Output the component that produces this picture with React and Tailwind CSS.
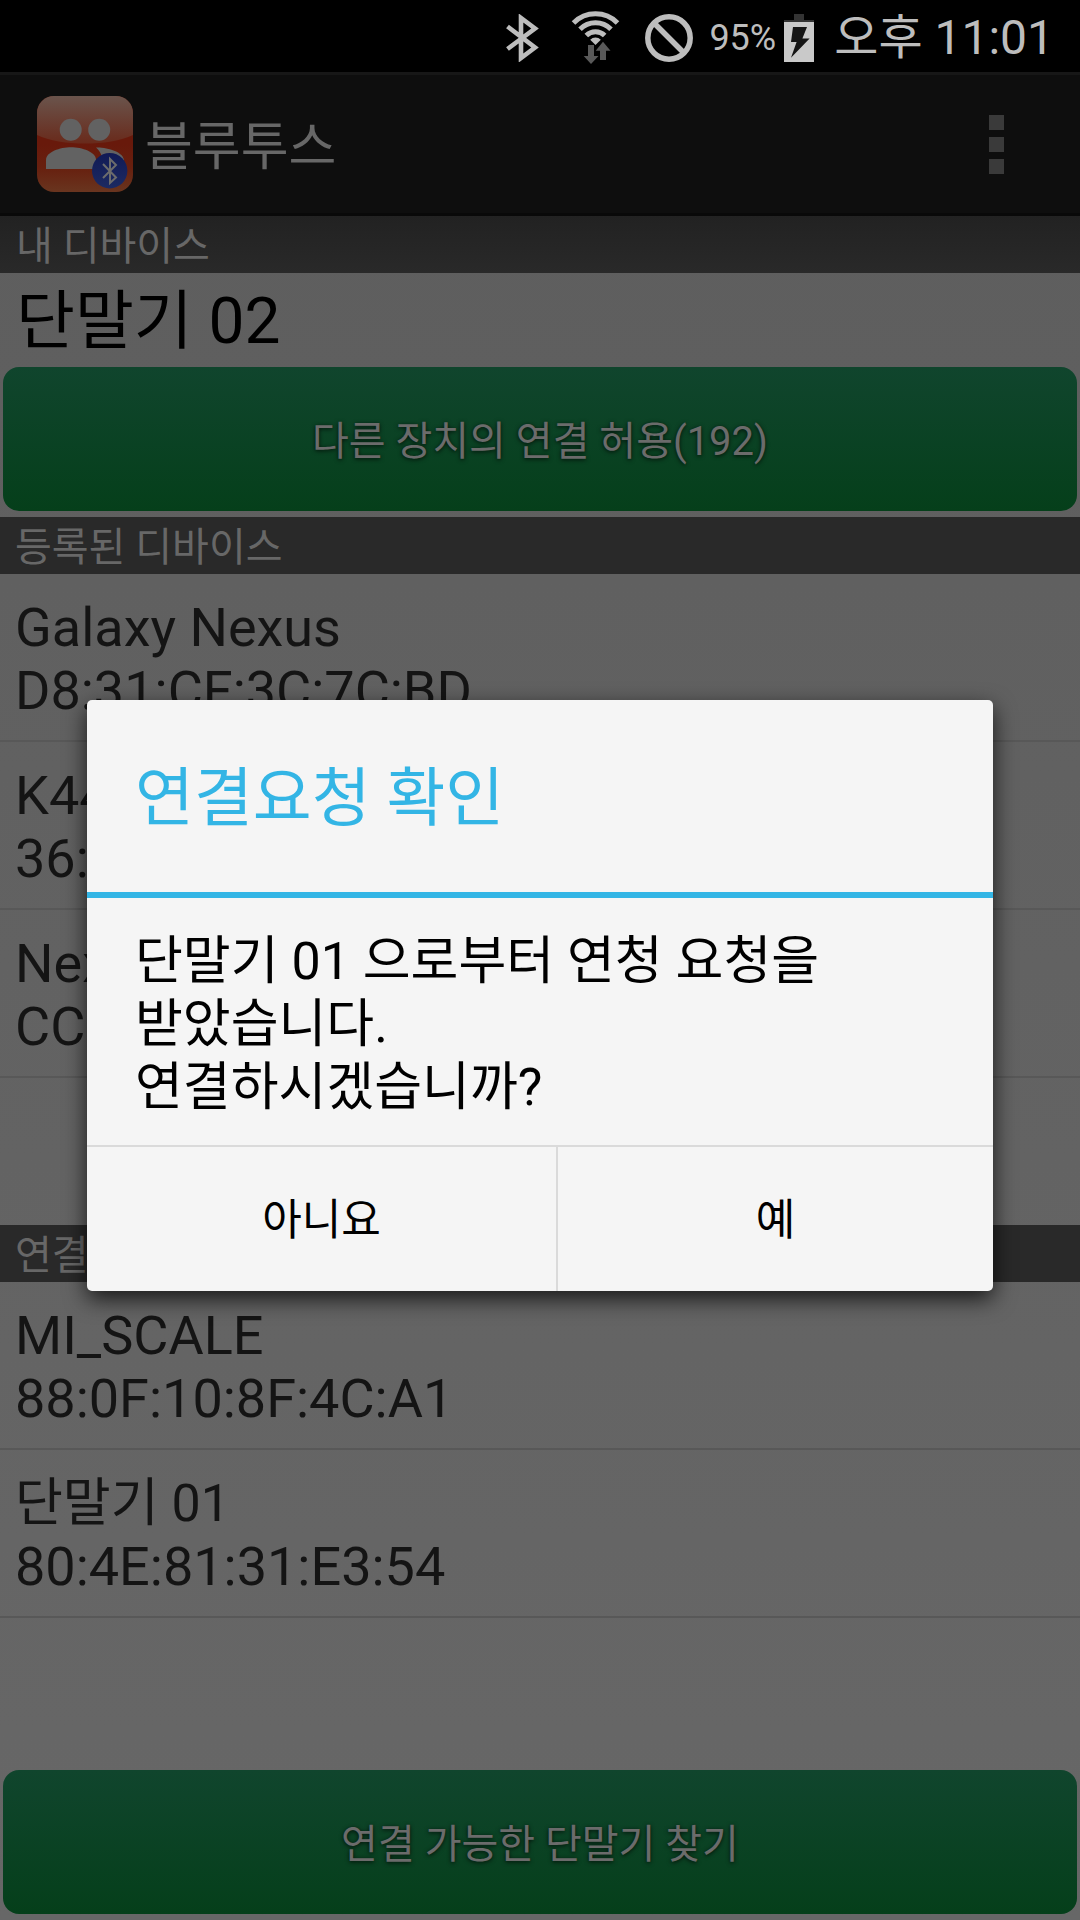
const paired = [
  { name: "Galaxy Nexus", address: "D8:31:CF:3C:7C:BD" },
  { name: "K44", address: "36:" },
  { name: "Nex", address: "CC" },
];

const found = [
  { name: "MI_SCALE", address: "88:0F:10:8F:4C:A1" },
  { name: "단말기 01", address: "80:4E:81:31:E3:54", korean: true },
];

function BluetoothStatusIcon() {
  return (
    <svg width="33" height="48" viewBox="0 0 33 48" fill="none" stroke="#bdbdbd" strokeWidth="4.6" aria-hidden="true">
      <path d="M1.500 12.500L29 33.500L15 44V4L29 14.500L1.500 35" />
    </svg>
  );
}

function WifiStatusIcon() {
  return (
    <svg width="50" height="54" viewBox="0 0 50 54" aria-hidden="true">
      <g fill="none" stroke="#bdbdbd" strokeWidth="5">
        <path d="M2.500 12A31 31 0 0 1 46.500 12" />
        <path d="M9 18.200A22 22 0 0 1 40 18.200" />
        <path d="M15.300 24.500A13 13 0 0 1 33.700 24.500" />
      </g>
      <path d="M24.500 34L19.200 28.700A7.500 7.500 0 0 1 29.800 28.700Z" fill="#bdbdbd" />
      <path d="M17 34H23V45H27.500L20 53L12.700 45H17Z" fill="#595959" />
      <path d="M32 30.700L39.500 39.700H35V49H29V39.700H24.700Z" fill="#595959" />
    </svg>
  );
}

function BlockedIcon() {
  return (
    <svg width="48" height="48" viewBox="0 0 48 48" fill="none" stroke="#bdbdbd" strokeWidth="5.500" aria-hidden="true">
      <circle cx="24" cy="24" r="21.200" />
      <path d="M9.500 9.500L38.500 38.500" />
    </svg>
  );
}

function BatteryIcon() {
  return (
    <svg width="30" height="48" viewBox="0 0 30 48" aria-hidden="true">
      <path d="M10 0H20V6H30V8H0V6H10Z" fill="#333333" />
      <path d="M0 8H30V48H0Z" fill="#c9c9c9" />
      <path d="M9 13H23L18.400 24.500H25.600L7 43.700L12.600 28H7Z" fill="#151515" />
    </svg>
  );
}

function AppIcon() {
  return (
    <svg width="96" height="96" viewBox="0 0 96 96" aria-hidden="true">
      <defs>
        <linearGradient id="base" x1="0" y1="0" x2="0" y2="1">
          <stop offset="0.5" stopColor="#68190b" />
          <stop offset="0.75" stopColor="#67200f" />
          <stop offset="1" stopColor="#69351f" />
        </linearGradient>
        <linearGradient id="gloss" x1="0" y1="0" x2="0" y2="1">
          <stop offset="0" stopColor="#6a544c" />
          <stop offset="1" stopColor="#692a1b" />
        </linearGradient>
        <linearGradient id="badge" x1="0" y1="0" x2="0" y2="1">
          <stop offset="0" stopColor="#111a55" />
          <stop offset="1" stopColor="#1c2a62" />
        </linearGradient>
        <clipPath id="tile">
          <rect width="96" height="96" rx="17" />
        </clipPath>
      </defs>
      <g clipPath="url(#tile)">
        <rect width="96" height="96" fill="url(#base)" />
        <path d="M0 0H96V39C84 45 66 47.500 48 47.500S12 45 0 39Z" fill="url(#gloss)" />
      </g>
      <g fill="#626262">
        <circle cx="33.700" cy="33.700" r="11" />
        <circle cx="62.200" cy="33.700" r="11" />
        <path d="M9 73V64C9 56 23 51.300 34 51.300S59 56 59 64V73Z" />
        <path d="M59 51.500C70 51 87 56 87 64.500V70H66C66 61 64 56 59 51.500Z" />
      </g>
      <circle cx="72.700" cy="74.700" r="17.700" fill="url(#badge)" />
      <path d="M66 68L79 81.500L73 87V63L79 69L66 82" fill="none" stroke="#6c6c6c" strokeWidth="2" />
    </svg>
  );
}

function SectionHeader({ children, first }) {
  return (
    <h2
      className={
        first
          ? "h-[57px] shrink-0 bg-linear-to-b from-[#222222] to-[#292929] px-4 text-[40px] leading-[62px] text-[#676767]"
          : "h-[57px] shrink-0 bg-[#292929] px-[15px] text-[40px] leading-[62px] text-[#676767]"
      }
    >
      {children}
    </h2>
  );
}

function DeviceList({ devices, className }) {
  return (
    <ul className={className}>
      {devices.map((d) => (
        <li key={d.name} className="border-b-2 border-[#585858] px-[15px] pt-[22px] pb-[18px] text-[54px] leading-[63px] text-[#141414]">
          <p className={d.korean ? "text-[52px]" : ""}>{d.name}</p>
          <p>{d.address}</p>
        </li>
      ))}
    </ul>
  );
}

function GreenButton({ children }) {
  return (
    <button
      type="button"
      className="mx-[3px] mb-[6px] h-36 shrink-0 rounded-[16px] bg-linear-to-b from-[#10452d] to-[#053f1a] pt-[5px] text-[40px] leading-[48px] text-[#6b6b6b] [text-shadow:0_1px_4px_rgba(0,0,0,0.8)]"
    >
      {children}
    </button>
  );
}

export default function App() {
  return (
    <div className="relative flex min-h-screen flex-col overflow-hidden bg-linear-to-b from-[#5d5d5d] to-[#676767] font-['Roboto','Noto_Sans_CJK_KR',sans-serif]">
      <div className="flex h-[72px] shrink-0 items-center justify-end bg-black pt-[3px] pr-[26px] text-[#bdbdbd]">
        <BluetoothStatusIcon />
        <span className="ml-8">
          <WifiStatusIcon />
        </span>
        <span className="ml-6">
          <BlockedIcon />
        </span>
        <span className="mr-2 ml-4 text-[36px] leading-[48px]">95%</span>
        <BatteryIcon />
        <span className="ml-5 text-[48px] leading-[56px]">오후 11:01</span>
      </div>

      <header className="flex h-36 shrink-0 items-center border-t-3 border-b-3 border-t-[#171717] border-b-[#090909] bg-[#0e0e0e] pr-[76px] pl-[37px]">
        <AppIcon />
        <h1 className="ml-3 grow pt-2 text-[52px] leading-[64px] text-[#676767]">블루투스</h1>
        <button type="button" aria-label="메뉴" className="flex flex-col gap-[7px]">
          <span className="size-[15px] bg-[#3a3a3a]" />
          <span className="size-[15px] bg-[#3a3a3a]" />
          <span className="size-[15px] bg-[#3a3a3a]" />
        </button>
      </header>

      <SectionHeader first>내 디바이스</SectionHeader>
      <p className="h-[94px] shrink-0 px-4 text-[64px] leading-[98px] text-black">단말기 02</p>
      <GreenButton>다른 장치의 연결 허용(192)</GreenButton>

      <SectionHeader>등록된 디바이스</SectionHeader>
      <DeviceList devices={paired} className="grow-4 basis-0" />

      <SectionHeader>연결</SectionHeader>
      <DeviceList devices={found} className="grow-3 basis-0" />
      <GreenButton>연결 가능한 단말기 찾기</GreenButton>

      <div className="absolute inset-x-0 top-[72px] bottom-0 flex items-center px-[87px] pb-px">
        <div
          role="dialog"
          aria-labelledby="dialog-title"
          className="w-full rounded-[5px] bg-[#f5f5f5] shadow-[0_8px_22px_0_rgba(0,0,0,0.75)]"
        >
          <h2 id="dialog-title" className="border-b-6 border-[#33b5e5] px-12 pt-[59px] pb-[53px] text-[64px] leading-[80px] text-[#33b5e5]">
            연결요청 확인
          </h2>
          <p className="px-12 pt-8 pb-[26px] text-[52px] leading-[63px] text-black">
            단말기 01 으로부터 연청 요청을
            <br />
            받았습니다.
            <br />
            연결하시겠습니까?
          </p>
          <div className="grid grid-cols-[13fr_12fr] border-t-2 border-[#dadada] text-[43px] leading-[48px] text-black">
            <button type="button" className="h-36 border-r-2 border-[#dadada] pt-[2px]">
              아니요
            </button>
            <button type="button" className="h-36 pt-[2px]">
              예
            </button>
          </div>
        </div>
      </div>
    </div>
  );
}
